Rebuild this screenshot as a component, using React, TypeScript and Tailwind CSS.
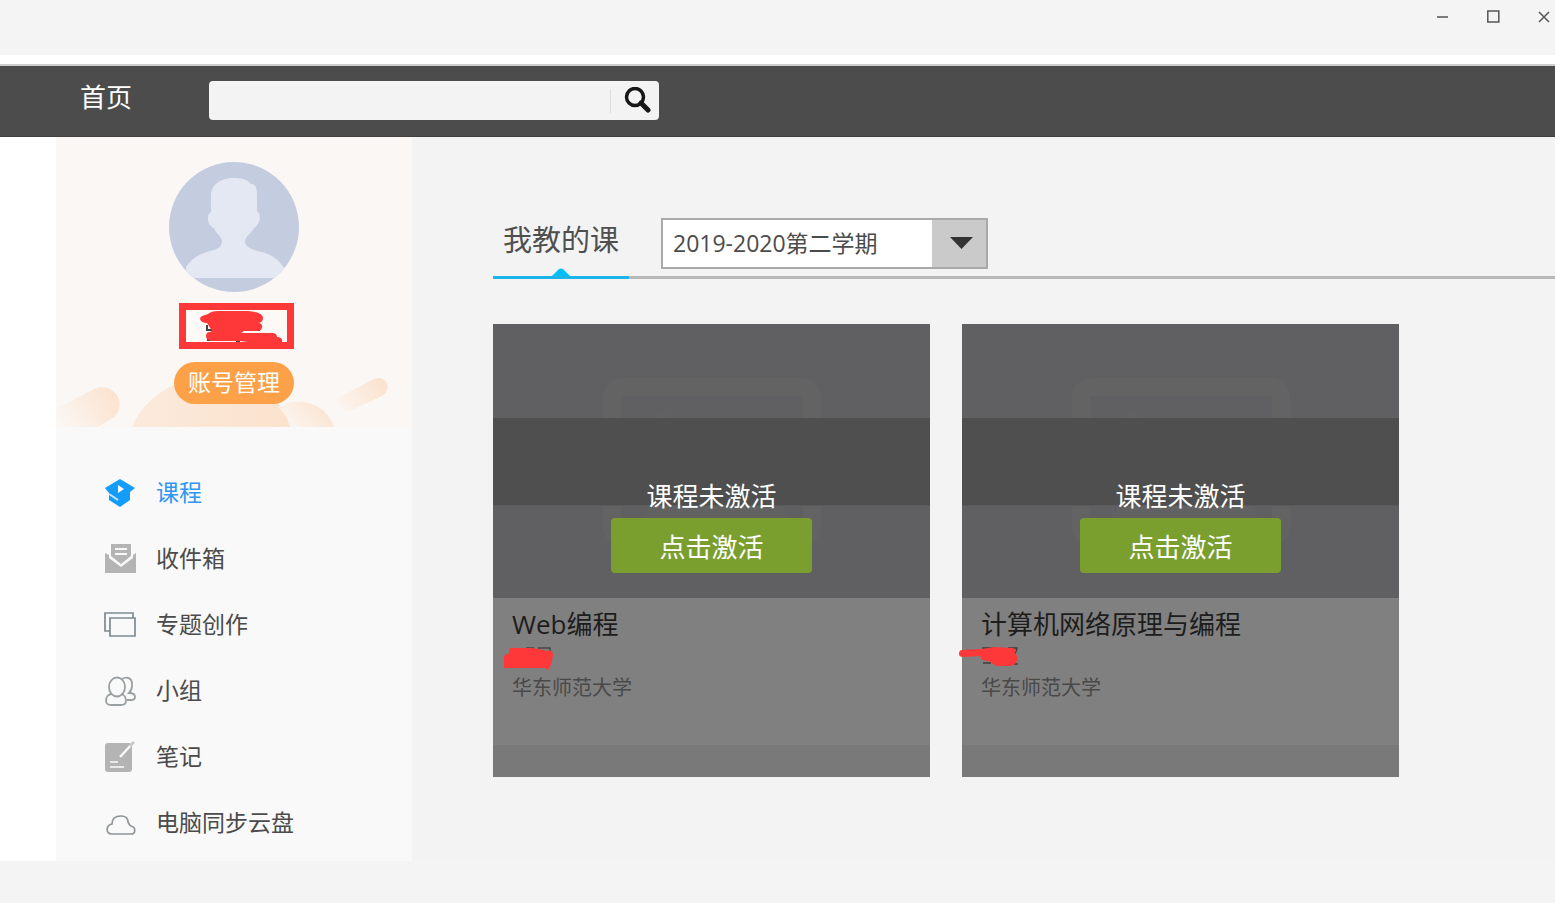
import { useState } from 'react';
import type { ReactNode } from 'react';

interface Course {
  title: string;
  school: string;
  mark: ReactNode;
}

const ICON_CLASS = 'w-8 h-8 shrink-0';

const COURSES: Course[] = [
  {
    title: 'Web编程',
    school: '华东师范大学',
    mark: (
      <svg className="absolute -left-2 top-0 w-[68px] h-7" viewBox="0 0 68 28" aria-hidden="true">
        <path d="M22 6h8M34 6h12v4M34 10h10" fill="none" stroke="#444" strokeWidth={1.5} />
        <path
          d="M6 8Q6 4 11 5l17 0 8 1 7 2q6-2 7 3l-1 7q-1 5-4 9l-3-2H4q-5 1-5-7 1-6 7-8z"
          fill="#fe3838"
          transform="translate(-1 1)"
        />
      </svg>
    ),
  },
  {
    title: '计算机网络原理与编程',
    school: '华东师范大学',
    mark: (
      <svg className="absolute -left-6 top-0 w-[68px] h-7" viewBox="0 0 68 28" aria-hidden="true">
        <path d="M25 6h11M51 6h9l-2 6M26 21h8M56 22h5" fill="none" stroke="#3c3c3c" strokeWidth={1.5} />
        <path
          d="M5 8l20-1 12-2 18 1q6 1 3 5 3 3 2 8-2 5-8 5H40q-5-2-6-4l-8-2q-4-1-2-4L6 15q-4 0-4-3 0-4 3-4z"
          fill="#fe3838"
        />
      </svg>
    ),
  },
];

const MENU: { label: string; icon: ReactNode }[] = [
  {
    label: '课程',
    icon: (
      <svg className={ICON_CLASS} viewBox="0 0 32 32" aria-hidden="true">
        <path d="M16 3l15 9-5 4v8l-10 7-11-7v-7l-4-5z" fill="#139cf8" />
        <path d="M14 9l6 4-6 4z" fill="#fff" />
        <path d="M5 18l9 6" stroke="#c5e6fd" strokeWidth={2} />
      </svg>
    ),
  },
  {
    label: '收件箱',
    icon: (
      <svg className={ICON_CLASS} viewBox="0 0 32 32" aria-hidden="true">
        <path d="M7 2h20v12l-10 8-10-8z" fill="#b4b4b4" />
        <path d="M11 7h12M11 12h12" stroke="#f9f9f9" strokeWidth={2} />
        <path d="M1 11l4 2v3l12 9 12-9v-3l3-2v20H1z" fill="#b4b4b4" />
      </svg>
    ),
  },
  {
    label: '专题创作',
    icon: (
      <svg className={ICON_CLASS} viewBox="0 0 32 32" fill="none" stroke="#7d8b91" strokeWidth={1.7} aria-hidden="true">
        <path d="M6 23H1V5h28v5" />
        <path d="M6 10h25v18H6z" />
      </svg>
    ),
  },
  {
    label: '小组',
    icon: (
      <svg className={ICON_CLASS} viewBox="0 0 32 32" fill="none" stroke="#9a9fa2" strokeWidth={1.8} aria-hidden="true">
        <path d="M18 5c5-3 11-1 10 7 0 3-1 5-3 7 4 0 6 1 6 4 0 2-2 3-4 3h-4" />
        <ellipse cx="13" cy="13" rx="8" ry="9.5" />
        <path d="M8 20c-4 0-6 3-6 7 0 2 2 4 5 4h10c3 0 5-1 5-4 0-4-1-6-5-7" />
      </svg>
    ),
  },
  {
    label: '笔记',
    icon: (
      <svg className={ICON_CLASS} viewBox="0 0 32 32" aria-hidden="true">
        <rect x="1" y="3" width="27" height="29" rx="3" fill="#b4b4b4" />
        <path d="M16 17L28 4" stroke="#f9f9f9" strokeWidth={2.5} />
        <path d="M26 6l4-4" stroke="#c8c8c8" strokeWidth={2.5} />
        <path d="M6 22h8M6 27h14" stroke="#e9e9e9" strokeWidth={2} />
      </svg>
    ),
  },
  {
    label: '电脑同步云盘',
    icon: (
      <svg className={ICON_CLASS} viewBox="0 0 32 32" fill="none" stroke="#8f9598" strokeWidth={1.7} aria-hidden="true">
        <path d="M8 28c-7 0-6-9 0-10 0-6 4-8 9-8 4 0 7 2 7 6 1 2 1 3 3 4 5 1 5 8 0 8z" />
      </svg>
    ),
  },
];

function TitleBar() {
  return (
    <div className="flex h-[55px] items-start justify-end gap-8 bg-[#f4f4f4] pt-2 text-[#555]">
      <button aria-label="最小化">
        <svg className="h-[18px] w-[18px]" viewBox="0 0 18 18" stroke="currentColor" strokeWidth={1.5}>
          <path d="M0 9h11" />
        </svg>
      </button>
      <button aria-label="最大化">
        <svg className="h-[18px] w-[18px]" viewBox="0 0 18 18" fill="none" stroke="currentColor" strokeWidth={1.5}>
          <path d="M0.8 3h11v11h-11z" />
        </svg>
      </button>
      <button aria-label="关闭">
        <svg className="h-[18px] w-[18px]" viewBox="0 0 18 18" stroke="currentColor" strokeWidth={1.5}>
          <path d="M2 4l10 10M12 4L2 14" />
        </svg>
      </button>
    </div>
  );
}

function Navbar() {
  return (
    <header className="mt-[9px] flex h-[73px] items-start border-t-2 border-b border-t-[#cfcfcf] border-b-[#3f3f3f] bg-[#4c4c4c] pl-20">
      <a href="#" className="mt-3 text-[26px] leading-[38px] text-white">
        首页
      </a>
      <form className="mt-[15px] ml-[77px] flex h-[39px] w-[450px] items-center rounded-[4px] bg-[#f3f3f3]">
        <input type="text" aria-label="搜索" className="h-full min-w-0 flex-1 px-3 text-xl outline-none" />
        <button type="button" aria-label="搜索" className="flex h-6 w-[49px] items-center justify-center border-l border-[#ddd] pl-1">
          <svg className="h-7 w-7" viewBox="0 0 28 28" fill="none" stroke="#171717" aria-hidden="true">
            <circle cx="12" cy="10" r="8.5" strokeWidth={3.5} />
            <path d="M18 16l7 7" strokeWidth={5} strokeLinecap="round" />
          </svg>
        </button>
      </form>
    </header>
  );
}

function Profile() {
  return (
    <section className="relative flex h-[290px] flex-col items-center bg-[#fbf7f4] pt-[25px]">
      <svg className="absolute bottom-0 left-0 h-[60px] w-full" viewBox="0 0 356 60" aria-hidden="true">
        <defs>
          <linearGradient id="peach" x1="0" x2="1" y1="0.8" y2="0.4">
            <stop offset="0" stopColor="#fbf7f4" />
            <stop offset="1" stopColor="#fbe3cf" />
          </linearGradient>
          <linearGradient id="hill" x1="0" x2="1">
            <stop offset="0" stopColor="#fbeadc" />
            <stop offset="1" stopColor="#fbe2cd" />
          </linearGradient>
        </defs>
        <path d="M0 42L38 22c17-8 35 12 20 28L42 60H0z" fill="url(#peach)" />
        <path d="M76 60c8-20 28-38 48-44h66c24 6 38 22 44 44z" fill="url(#hill)" />
        <path d="M222 40c24-12 48-3 56 20h-44c-1-8-6-14-12-20z" fill="url(#peach)" />
        <path d="M276 34l42-22c12-5 19 10 8 17l-34 16z" fill="url(#peach)" />
      </svg>
      <svg className="h-[130px] w-[130px]" viewBox="0 0 130 130" role="img" aria-label="头像">
        <clipPath id="avatar">
          <circle cx="65" cy="65" r="65" />
        </clipPath>
        <g clipPath="url(#avatar)">
          <path d="M0 0h130v130H0z" fill="#c4cce0" />
          <path
            d="M42 49V34c0-12 10-18 23-18 8 0 14 2 17 6 5 0 6 5 6 11v16c5 3 3 14-3 17-2 5-9 8-9 14 1 6 8 8 17 10 11 3 18 9 22 16v10H17v-11c5-8 13-13 24-16 8-2 12-4 12-10-1-6-6-7-8-13-7-2-8-14-3-16z"
            fill="#e4e8f2"
          />
        </g>
      </svg>
      <div className="mt-[11px] ml-1 flex h-[46px] w-[115px] items-center justify-center border-[7px] border-[#fe3838] bg-[#fdf9f6]">
        <svg className="h-8 w-[101px]" viewBox="0 0 101 32" aria-hidden="true">
          <path d="M21 15v5h6M21 30h8M50 31h4M54 20h20" fill="none" stroke="#444" strokeWidth={2} />
          <path
            d="M22 4q3-3 10-3h30q15 1 15 7 0 4-4 5 4 1 3 5-1 3-5 3H58l-3 2h31q5 0 5 4 6 0 5 5H62l-8-1H25q-5-1-5-5t4-4l2-1-5-8q-6 0-7-4 0-3 5-4z"
            fill="#fe3838"
          />
        </svg>
      </div>
      <button className="relative mt-[13px] h-[42px] w-[120px] rounded-full bg-[#fca147] pb-[2px] text-[23px] leading-10 whitespace-nowrap text-white">
        账号管理
      </button>
    </section>
  );
}

function Sidebar() {
  const [active, setActive] = useState('课程');

  return (
    <aside className="w-[356px] shrink-0 bg-[#f9f9f9]">
      <Profile />
      <nav className="pt-8 pb-[6px]">
        {MENU.map(({ label, icon }) => (
          <a
            key={label}
            href="#"
            onClick={() => setActive(label)}
            className={`flex h-[66px] items-center gap-5 pl-12 text-[23px] ${active === label ? 'text-[#2f96f3]' : 'text-[#4b4b4b]'}`}
          >
            {icon}
            {label}
          </a>
        ))}
      </nav>
    </aside>
  );
}

function CourseCard({ title, school, mark }: Course) {
  return (
    <article className="w-[437px] bg-[#808080]">
      <div className="relative h-[274px] bg-[#606062]">
        <svg className="absolute top-[54px] left-[110px] h-[168px] w-[220px]" viewBox="0 0 220 168" fill="none" aria-hidden="true">
          <rect x="9" y="9" width="200" height="150" rx="10" stroke="#636363" strokeWidth={18} />
          <circle cx="60" cy="48" r="12" fill="#626263" />
          <path d="M28 150l52-56 34 34 40-48 38 70z" fill="#626263" />
        </svg>
        <div className="absolute inset-x-0 top-[94px] h-[88px] border-b border-[#5a5a5a] bg-[#4f4f4f]" />
        <div className="absolute inset-0 flex flex-col items-center pt-[152px] text-[26px] text-white">
          <p className="h-[42px] leading-10">课程未激活</p>
          <button className="h-[55px] w-[201px] rounded-[4px] bg-[#7a9f2f] pt-[3px]">点击激活</button>
        </div>
      </div>
      <div className="h-[147px] px-[19px] pt-2">
        <h2 className="text-[26px] leading-9 text-[#1d1d1d]">{title}</h2>
        <div className="relative h-7">{mark}</div>
        <p className="mt-1 text-xl leading-7 text-[#494949]">{school}</p>
      </div>
      <div className="h-8 bg-[#797979]" />
    </article>
  );
}

export default function App() {
  return (
    <div className="min-h-screen bg-[#f4f4f4] font-['Open_Sans','Noto_Sans_CJK_SC',sans-serif]">
      <div className="bg-white">
        <TitleBar />
        <Navbar />
        <div className="flex pl-14">
          <Sidebar />
          <main className="min-w-0 flex-1 bg-[#f3f3f3] pt-[81px] pl-[81px]">
            <div className="flex h-[61px] items-start gap-8 border-b-[3px] border-[#b8b8b8]">
              <h1 className="relative h-[61px] w-[136px] border-b-[3px] border-[#1cb4e9] text-center text-[29px] leading-[44px] text-[#4f4f4f]">
                我教的课
                <svg className="absolute bottom-0 left-[59px] h-2 w-[18px]" viewBox="0 0 18 8" aria-hidden="true">
                  <path d="M0 8l7-7q2-1 4 0l7 7z" fill="#00bfff" />
                </svg>
              </h1>
              <div className="relative">
                <select
                  aria-label="学期"
                  className="h-[51px] w-[327px] appearance-none border-2 border-[#a9a9a9] bg-white pl-[10px] text-[23px] text-[#4b4b4b]"
                >
                  <option>2019-2020第二学期</option>
                </select>
                <div className="pointer-events-none absolute inset-y-[2px] right-[2px] flex w-[54px] items-center justify-center bg-[#cacaca] pb-[2px] pl-1">
                  <svg className="h-3 w-[23px]" viewBox="0 0 23 12" aria-hidden="true">
                    <path d="M0 0h23L11.5 12z" fill="#333" />
                  </svg>
                </div>
              </div>
            </div>
            <div className="flex flex-wrap gap-8 pt-[45px] pb-12">
              {COURSES.map((course) => (
                <CourseCard key={course.title} {...course} />
              ))}
            </div>
          </main>
        </div>
      </div>
    </div>
  );
}
